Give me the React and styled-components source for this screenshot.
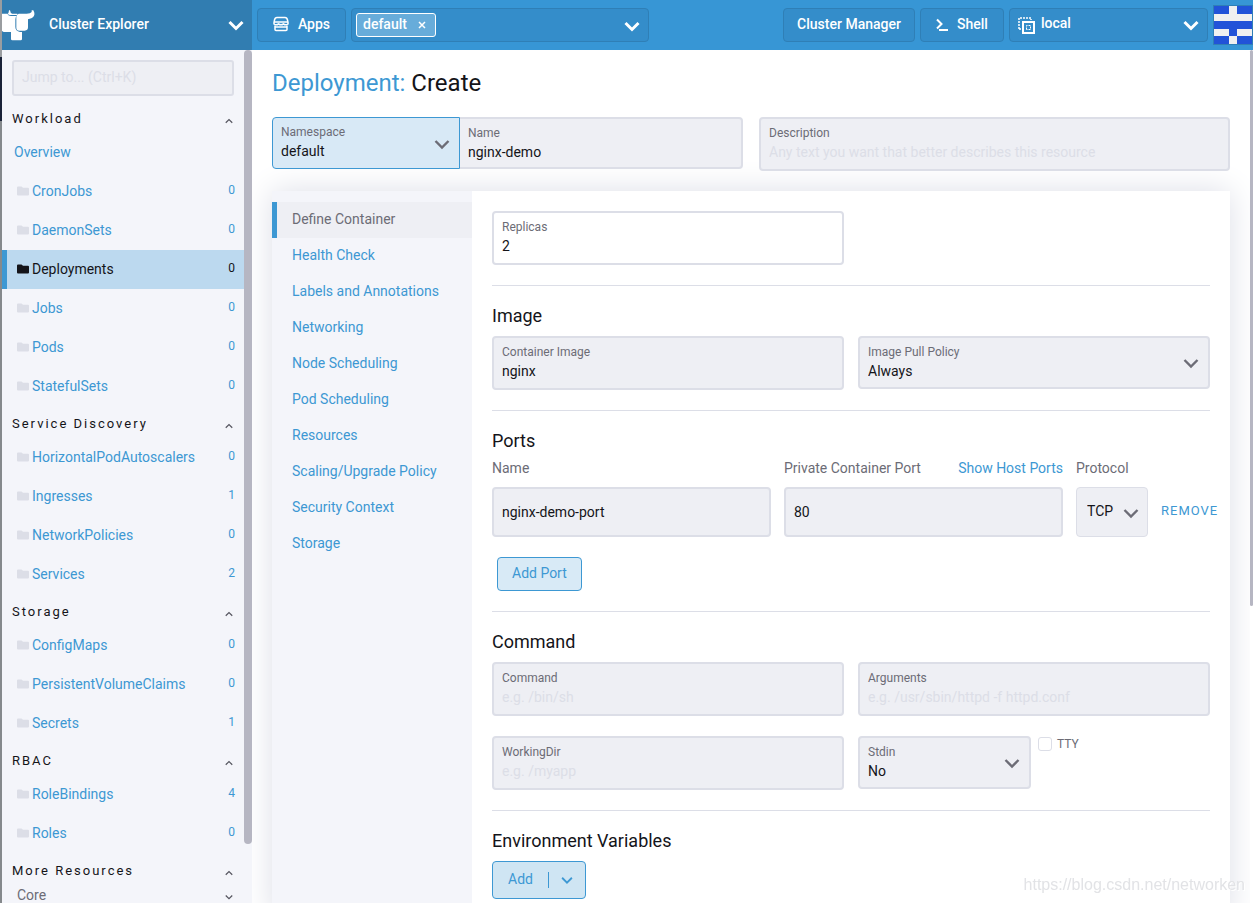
import React, { useState } from 'react'
import styled, { createGlobalStyle, css } from 'styled-components'

const GlobalStyle = createGlobalStyle`
    * {
        box-sizing: border-box;
    }

    body {
        margin: 0;
        color: #141419;
        background: #fff;
        font-family: Roboto, "Noto Sans", sans-serif;
        font-size: 14px;
        line-height: 20px;
    }

    button, input, select {
        font: inherit;
        color: inherit;
        margin: 0;
    }

    a {
        color: #3d98d3;
        text-decoration: none;
    }
`

const Page = styled.div`
    display: grid;
    grid-template-columns: 250px minmax(0, 1fr);
    grid-template-rows: 50px minmax(0, 1fr);
    height: 100vh;
    overflow: hidden;
    padding-left: 2px;
    background: linear-gradient(180deg, #9a9da0 0 57px, #1a2238 57px 121px, #85898c 121px) left / 2px 100% no-repeat;
`

// ---- top bar

const Brand = styled.button`
    display: flex;
    align-items: center;
    padding: 0 8px 0 0;
    border: none;
    background: #317db1;
    color: #fff;
    font-weight: 500;
    text-align: left;
`

const BrandName = styled.span`
    flex: 1;
    padding: 0 0 2px 13px;
`

const TopBar = styled.header`
    display: flex;
    align-items: center;
    gap: 5px;
    padding-left: 5px;
    background: #3796d5;
    color: #fff;
    font-weight: 500;
`

const topBox = css`
    display: flex;
    align-items: center;
    height: 34px;
    border: 1px solid #2f7fb6;
    border-radius: 4px;
    background: #348dca;
`

const TopButton = styled.button`
    ${topBox}
    justify-content: center;
    gap: 9px;
    width: ${props => props.$width};
    padding: 0 0 2px;
`

const NamespaceFilter = styled.div`
    ${topBox}
    justify-content: space-between;
    width: 298px;
    padding: 0 8px 0 4px;
`

const Tag = styled.span`
    display: flex;
    align-items: center;
    gap: 10px;
    height: 24px;
    padding: 0 8px 2px 6px;
    border: 1px solid #fff;
    border-radius: 3px;
    background: #67acda;
`

const BareButton = styled.button`
    display: flex;
    align-items: center;
    padding: 2px 0 0;
    border: none;
    background: none;
`

const Spacer = styled.div`
    flex: 1;
`

const ClusterPicker = styled.label`
    ${topBox}
    position: relative;
    gap: 6px;
    width: 199px;
    padding: 0 8px;

    select {
        flex: 1;
        height: 24px;
        padding: 0 0 4px;
        border: none;
        background: none;
        appearance: none;
    }
`

// ---- side navigation

const SideWrap = styled.div`
    display: flex;
    min-height: 0;
    background: #f4f5fa;
`

const Side = styled.nav`
    flex: 1;
    overflow: hidden;
`

const Thumb = styled.div`
    width: ${props => props.$width};
    height: ${props => props.$height};
    border-radius: 4px;
    background: #b6b6c2;
`

const JumpBox = styled.div`
    padding: 10px 10px 5px;

    input {
        display: block;
        width: 100%;
        height: 36px;
        padding: 0 8px 2px;
        border: 2px solid #dcdee7;
        border-radius: 3px;
        background: #eeeff4;
    }

    input::placeholder {
        color: #dcdee7;
        opacity: 1;
    }
`

const GroupHead = styled.button`
    display: flex;
    align-items: center;
    justify-content: space-between;
    width: 100%;
    height: 32px;
    padding: 4px 11px 0 10px;
    border: none;
    background: none;
    font-size: 13px;
    letter-spacing: 2px;

    svg {
        margin-top: 4px;
        color: #55555f;
    }
`

const SubGroup = styled(GroupHead)`
    height: 20px;
    padding: 0 11px 0 15px;
    color: #6c6c76;
    font-size: 14px;
    letter-spacing: 0;
    line-height: 12px;
`

const NavLink = styled.a`
    display: flex;
    align-items: center;
    gap: 3px;
    height: 39px;
    padding: 0 9px 2px ${props => (props.$plain ? '7px' : '10px')};
    border-left: 5px solid ${props => (props.$active ? '#3d98d3' : 'transparent')};
    background: ${props => (props.$active ? '#bcd9ef' : 'none')};
    color: ${props => (props.$active ? '#141419' : '#3d98d3')};

    svg {
        color: ${props => (props.$active ? '#141419' : '#dcdee7')};
    }
`

const Count = styled.span`
    margin-left: auto;
    padding-bottom: 2px;
    font-size: 12px;
`

// ---- main area

const MainWrap = styled.div`
    display: flex;
    min-width: 0;
    min-height: 0;
`

const Main = styled.main`
    flex: 1;
    display: flex;
    flex-direction: column;
    min-width: 0;
    overflow: hidden;
    padding: 17px 20px 0;
`

const Title = styled.h1`
    margin: 0 0 18px;
    font-size: 24px;
    font-weight: 400;
    line-height: 32px;

    span {
        color: #3d98d3;
    }
`

const MetaRow = styled.div`
    display: grid;
    grid-template-columns: 1fr 1fr;
    align-items: start;
    gap: 16px;
    margin-bottom: 20px;
`

const Joined = styled.div`
    display: grid;
    grid-template-columns: 188px 1fr;
`

const Card = styled.div`
    flex: 1 0 auto;
    display: grid;
    grid-template-columns: 200px minmax(0, 1fr);
    background: #fff;
    box-shadow: 0 0 30px #dcdee7;
`

const Tabs = styled.div`
    padding-top: 11px;
    background: #f4f5fa;
`

const Tab = styled.a`
    display: block;
    padding: 7px 15px 9px;
    border-left: 5px solid ${props => (props.$active ? '#3d98d3' : 'transparent')};
    background: ${props => (props.$active ? '#eeeff4' : 'none')};
    color: ${props => (props.$active ? '#6c6c76' : '#3d98d3')};
`

const Form = styled.div`
    padding: 0 20px;
    background: #fff;
`

const Section = styled.section`
    padding: ${props => (props.$first ? '20px' : '18px')} 0 20px;

    & + & {
        border-top: 1px solid #dcdee7;
    }
`

const Heading = styled.h3`
    margin: 0 0 8px;
    font-size: 18px;
    font-weight: 400;
    line-height: 24px;
`

const Row = styled.div`
    display: grid;
    grid-template-columns: 1fr 1fr;
    align-items: start;
    gap: 20px 14px;
`

const HalfRow = styled.div`
    display: grid;
    grid-template-columns: 173px 1fr;
    align-items: start;
    gap: 7px;
`

const Box = styled.label`
    position: relative;
    display: block;
    height: ${props => props.$height || '54px'};
    padding: 5px 8px 0;
    border: 2px solid #dcdee7;
    border-radius: ${props => (props.$joined ? '0 4px 4px 0' : '4px')};
    background: ${props => (props.$white ? '#fff' : '#eeeff4')};

    input, select {
        display: block;
        width: 100%;
        height: 20px;
        padding: 0;
        border: none;
        outline: none;
        background: none;
        appearance: none;
    }

    input::placeholder {
        color: #dcdee7;
        opacity: 1;
    }

    ${props => props.$joined && css`
        border-left: none;
    `}

    ${props => props.$accent && css`
        border: 1px solid #3d98d3;
        border-radius: 4px 0 0 4px;
        background: #d8e9f6;
    `}
`

const BoxLabel = styled.span`
    display: block;
    color: #6c6c76;
    font-size: 12px;
    line-height: 18px;
`

const Arrow = styled.span`
    position: absolute;
    right: 9px;
    bottom: 16px;
    display: flex;
    color: #6c6c76;
    pointer-events: none;
`

const ClusterArrow = styled(Arrow)`
    right: 8px;
    bottom: 8px;
    color: #fff;
`

const PortTable = styled.div`
    display: grid;
    grid-template-columns: 279px 279px 72px 1fr;
    column-gap: 13px;
    align-items: center;
    color: #6c6c76;
`

const PortLabel = styled.div`
    display: flex;
    justify-content: space-between;
    height: 26px;
    line-height: 14px;
    white-space: nowrap;
`

const PortInput = styled.input`
    width: 100%;
    height: 50px;
    padding: 0 8px;
    border: 2px solid #dcdee7;
    border-radius: 4px;
    background: #eeeff4;
    color: #141419;
`

const Protocol = styled.div`
    position: relative;

    select {
        display: block;
        width: 100%;
        height: 50px;
        padding: 0 10px 2px;
        border: 1px solid #dcdee7;
        border-radius: 4px;
        background: #eeeff4;
        color: #141419;
        appearance: none;
    }
`

const Remove = styled.button`
    justify-self: start;
    padding: 0 0 2px;
    border: none;
    background: none;
    color: #3d98d3;
    font-size: 13px;
    letter-spacing: 1px;
`

const SoftButton = styled.button`
    display: block;
    height: 34px;
    margin: 20px 0 0 5px;
    padding: 0 14px 2px;
    border: 1px solid #3d98d3;
    border-radius: 4px;
    background: #d8eaf6;
    color: #3d98d3;
`

const SplitButton = styled.div`
    display: inline-flex;
    align-items: center;
    height: 38px;
    border: 1px solid #3d98d3;
    border-radius: 4px;
    background: #cfe5f3;

    button {
        padding: 0 15px 2px;
        border: none;
        background: none;
        color: #3d98d3;
    }

    button + button {
        display: flex;
        align-items: center;
        height: 16px;
        padding: 0 12px;
        border-left: 1px solid #3d98d3;
    }
`

const Check = styled.label`
    display: flex;
    align-items: center;
    gap: 5px;
    color: #6c6c76;
    font-size: 12px;
    line-height: 16px;

    input {
        width: 14px;
        height: 14px;
        border: 1px solid #dcdee7;
        border-radius: 3px;
        background: #fff;
        appearance: none;
    }
`

const Watermark = styled.div`
    position: fixed;
    right: 8px;
    bottom: 8px;
    color: #e2e3e6;
    font-family: "Liberation Sans", sans-serif;
    font-size: 16px;
    text-shadow: 1px 1px 0 #fff;
    pointer-events: none;
`

// ---- icons

const Chevron = ({ size = 16, stroke = 3, up }) => (
    <svg width={size} height={size} viewBox="0 0 16 16" fill="none" stroke="currentColor" strokeWidth={stroke}>
        <path d={up ? 'M1.5 11.5 L8 5 L14.5 11.5' : 'M1.5 5 L8 11.5 L14.5 5'} />
    </svg>
)

const Folder = () => (
    <svg width="12" height="10" viewBox="0 0 12 10" fill="currentColor">
        <path d="M1 .5H4.5L6 1.8H11A1 1 0 0 1 12 2.8V8.5A1 1 0 0 1 11 9.5H1A1 1 0 0 1 0 8.5V1.5A1 1 0 0 1 1 .5Z" />
    </svg>
)

const Logo = () => (
    <svg width="34" height="32" viewBox="0 0 102 96" fill="#fff">
        <path d="M0 14H17Q19 14 20 10L21 4H24Q25 13 31 14H46V18H25Q20 18 17 14Z" />
        <path d="M0 14H16Q19 21 27 21H44Q40 25 40 32V54Q40 66 54 69H60V90Q60 94 56 94H31Q27 94 27 90V69H5L0 66Z" />
        <path d="M50 14H70Q85 15 89 9V4H94L97 11Q99 22 88 28L78 31V55Q78 65 68 65H52Q43 65 43 56V24Q43 16 50 14Z" />
    </svg>
)

const StoreIcon = () => (
    <svg width="16" height="16" viewBox="0 0 16 16" fill="none" stroke="currentColor" strokeWidth="1.5">
        <path d="M4 1.5H12Q14 1.5 14.5 4L15 6.5V8Q12.8 9.5 10.4 8Q8 9.5 5.6 8Q3.2 9.5 1 8V6.5L1.5 4Q2 1.5 4 1.5Z" />
        <path d="M1 6H15M2 9.5V13.5Q2 14.5 3 14.5H13Q14 14.5 14 13.5V9.5M2 11H14" />
    </svg>
)

const ShellIcon = () => (
    <svg width="12" height="14" viewBox="0 0 12 14" fill="none" stroke="currentColor" strokeWidth="2">
        <path d="M1 2.5L5.5 7L1 11.5M3 13H12" />
    </svg>
)

const ClusterIcon = () => (
    <svg width="17" height="17" viewBox="0 0 17 17" fill="none" stroke="currentColor">
        <path d="M1 12V1H13V3M1 12H4" strokeWidth="1.5" strokeDasharray="2 1" />
        <rect x="5" y="5" width="11" height="11" strokeWidth="2" />
        <path d="M8.5 12.5V8.5H12.5V12.5Z" strokeWidth="1" strokeDasharray="2 1" />
    </svg>
)

const Avatar = () => (
    <svg width="40" height="40" viewBox="0 0 40 40" role="img" aria-label="User">
        <rect width="40" height="40" fill="#2f7fb6" />
        <rect x="1" y="1" width="38" height="38" fill="#2253d8" />
        <g fill="#f0f0f0">
            <path d="M16 1H24V9H39V16H1V9H16Z" />
            <path d="M1 24H16V31H1ZM24 24H39V31H24ZM16 31H24V39H16Z" />
        </g>
    </svg>
)

const groups = [
    {
        name: 'Workload',
        overview: true,
        items: [['CronJobs', 0], ['DaemonSets', 0], ['Deployments', 0], ['Jobs', 0], ['Pods', 0], ['StatefulSets', 0]],
    },
    {
        name: 'Service Discovery',
        items: [['HorizontalPodAutoscalers', 0], ['Ingresses', 1], ['NetworkPolicies', 0], ['Services', 2]],
    },
    { name: 'Storage', items: [['ConfigMaps', 0], ['PersistentVolumeClaims', 0], ['Secrets', 1]] },
    { name: 'RBAC', items: [['RoleBindings', 4], ['Roles', 0]] },
    { name: 'More Resources', items: [] },
]

const tabs = [
    'Define Container',
    'Health Check',
    'Labels and Annotations',
    'Networking',
    'Node Scheduling',
    'Pod Scheduling',
    'Resources',
    'Scaling/Upgrade Policy',
    'Security Context',
    'Storage',
]

const TextField = ({ label, value, placeholder, ...rest }) => (
    <Box {...rest}>
        <BoxLabel>{label}</BoxLabel>
        <input defaultValue={value} placeholder={placeholder} />
    </Box>
)

const SelectField = ({ label, value, ...rest }) => (
    <Box $height="53px" {...rest}>
        <BoxLabel>{label}</BoxLabel>
        <select defaultValue={value}>
            <option>{value}</option>
        </select>
        <Arrow><Chevron stroke={2.4} /></Arrow>
    </Box>
)

const SideNav = () => (
    <SideWrap>
        <Side>
            <JumpBox>
                <input aria-label="Jump to" placeholder="Jump to... (Ctrl+K)" />
            </JumpBox>
            {groups.map(group => (
                <div key={group.name}>
                    <GroupHead>{group.name}<Chevron size={8} stroke={2.4} up /></GroupHead>
                    {group.overview && <NavLink href="#" $plain>Overview</NavLink>}
                    {group.items.map(([name, count]) => (
                        <NavLink key={name} href="#" $active={name === 'Deployments'}>
                            <Folder />
                            {name}
                            <Count>{count}</Count>
                        </NavLink>
                    ))}
                </div>
            ))}
            <SubGroup>Core<Chevron size={8} stroke={2.4} /></SubGroup>
        </Side>
        <Thumb $width="8px" $height="794px" />
    </SideWrap>
)

const App = () => {
    const [active, setActive] = useState('Define Container')

    return (
        <Page>
            <GlobalStyle />
            <Brand>
                <Logo />
                <BrandName>Cluster Explorer</BrandName>
                <Chevron />
            </Brand>
            <TopBar>
                <TopButton $width="89px"><StoreIcon />Apps</TopButton>
                <NamespaceFilter>
                    <Tag>
                        default
                        <BareButton aria-label="Remove default">
                            <svg width="10" height="10" viewBox="0 0 10 10" stroke="currentColor" strokeWidth="1.5">
                                <path d="M2 2L8 8M8 2L2 8" />
                            </svg>
                        </BareButton>
                    </Tag>
                    <BareButton aria-label="Namespaces"><Chevron /></BareButton>
                </NamespaceFilter>
                <Spacer />
                <TopButton $width="132px">Cluster Manager</TopButton>
                <TopButton $width="84px"><ShellIcon />Shell</TopButton>
                <ClusterPicker>
                    <ClusterIcon />
                    <select aria-label="Cluster" defaultValue="local"><option>local</option></select>
                    <ClusterArrow><Chevron /></ClusterArrow>
                </ClusterPicker>
                <Avatar />
            </TopBar>

            <SideNav />

            <MainWrap>
                <Main>
                    <Title><span>Deployment:</span> Create</Title>
                    <MetaRow>
                        <Joined>
                            <SelectField label="Namespace" value="default" $height="52px" $accent />
                            <TextField label="Name" value="nginx-demo" $height="52px" $joined />
                        </Joined>
                        <TextField label="Description" placeholder="Any text you want that better describes this resource" />
                    </MetaRow>

                    <Card>
                        <Tabs>
                            {tabs.map(tab => (
                                <Tab key={tab} href="#" $active={tab === active} onClick={() => setActive(tab)}>{tab}</Tab>
                            ))}
                        </Tabs>
                        <Form>
                            <Section $first>
                                <Row>
                                    <TextField label="Replicas" value="2" $white />
                                </Row>
                            </Section>
                            <Section>
                                <Heading>Image</Heading>
                                <Row>
                                    <TextField label="Container Image" value="nginx" />
                                    <SelectField label="Image Pull Policy" value="Always" />
                                </Row>
                            </Section>
                            <Section>
                                <Heading>Ports</Heading>
                                <PortTable>
                                    <PortLabel><label htmlFor="port-name">Name</label></PortLabel>
                                    <PortLabel>
                                        <label htmlFor="port-number">Private Container Port</label>
                                        <a href="#">Show Host Ports</a>
                                    </PortLabel>
                                    <PortLabel><label htmlFor="protocol">Protocol</label></PortLabel>
                                    <span />
                                    <PortInput id="port-name" defaultValue="nginx-demo-port" />
                                    <PortInput id="port-number" defaultValue="80" />
                                    <Protocol>
                                        <select id="protocol" defaultValue="TCP"><option>TCP</option></select>
                                        <Arrow><Chevron stroke={2.4} /></Arrow>
                                    </Protocol>
                                    <Remove>REMOVE</Remove>
                                </PortTable>
                                <SoftButton>Add Port</SoftButton>
                            </Section>
                            <Section>
                                <Heading>Command</Heading>
                                <Row>
                                    <TextField label="Command" placeholder="e.g. /bin/sh" />
                                    <TextField label="Arguments" placeholder="e.g. /usr/sbin/httpd -f httpd.conf" />
                                    <TextField label="WorkingDir" placeholder="e.g. /myapp" />
                                    <HalfRow>
                                        <SelectField label="Stdin" value="No" />
                                        <Check><input type="checkbox" />TTY</Check>
                                    </HalfRow>
                                </Row>
                            </Section>
                            <Section>
                                <Heading>Environment Variables</Heading>
                                <SplitButton>
                                    <button>Add</button>
                                    <button aria-label="More options"><Chevron size={12} stroke={2.4} /></button>
                                </SplitButton>
                            </Section>
                        </Form>
                    </Card>
                </Main>
                <Thumb $width="3px" $height="556px" />
            </MainWrap>
            <Watermark>https://blog.csdn.net/networken</Watermark>
        </Page>
    )
}

export default App
